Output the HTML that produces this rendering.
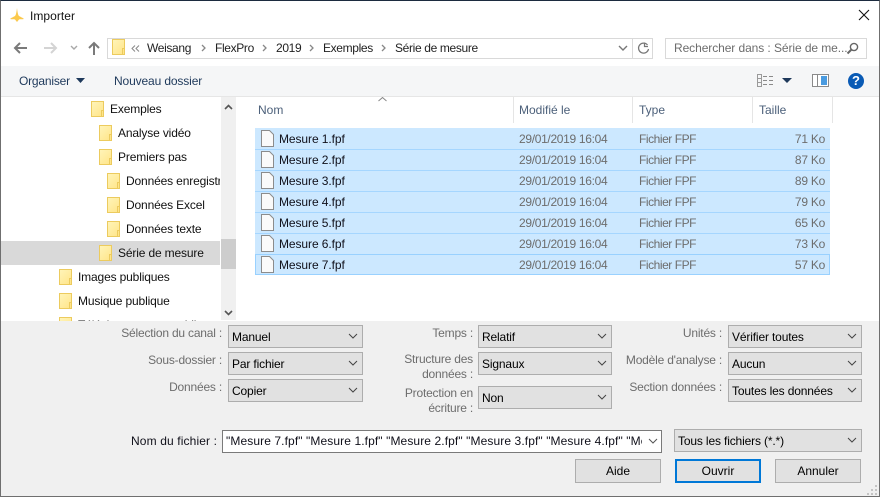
<!DOCTYPE html>
<html><head><meta charset="utf-8"><style>
html,body{margin:0;padding:0;background:#fff}
body{width:880px;height:497px;overflow:hidden;position:relative;font:12px/16px "Liberation Sans",sans-serif;color:#000}
div,span,svg{position:absolute;box-sizing:border-box;white-space:nowrap}
.f{width:13px;height:16px;background:linear-gradient(135deg,#fff4b8,#ffe58a);border:1px solid #eccb5e}
.f:after{content:"";position:absolute;right:-1px;bottom:-1px;width:3px;height:7px;border:1px solid #eccb5e;background:#ffe58a;box-sizing:border-box}
.t{color:#111;letter-spacing:-.15px}
.p{top:40px;color:#222;letter-spacing:-.35px}
.hd{color:#4c607a;top:102px}
.sep{width:1px;top:97px;height:26px;background:#e5e5e5}
.row{left:255px;width:575px;height:21px;top:0;background:#cce8ff;border-bottom:1px solid #a5d6ff}
.n{left:279px;color:#10101a;letter-spacing:-.08px}
.d{left:519px;color:#6d6d6d;letter-spacing:-.32px}
.y{left:639px;color:#6d6d6d;letter-spacing:-.45px}
.z{width:60px;left:765px;text-align:right;color:#6d6d6d;letter-spacing:-.25px}
.l{color:#6d6d6d;text-align:right;letter-spacing:-.2px}
.c{height:23px;background:#e1e1e1;border:1px solid #adadad;padding:3px 0 0 3px;line-height:16px;letter-spacing:-.15px}
.c svg{right:4px;top:7px}
.b{background:#e1e1e1;border:1px solid #adadad;height:24px;width:86px;top:459px;text-align:center;line-height:22px}
</style></head><body>

<div style="left:0;top:0;width:880px;height:497px;border:1px solid #6f6f6f;border-top:1px solid #1c2b3f;z-index:50"></div>

<svg style="left:10px;top:8px" width="14" height="14" viewBox="0 0 14 14"><path d="M7 0C7.5 4 8 7 9 8C10.5 9 12.5 9.5 14 11C12 11.5 10 11 9 11.5L7 14L5 11.5C4 11 2 11.5 0 11C1.5 9.5 3.5 9 5 8C6 7 6.5 4 7 0Z" fill="#fbc94c"/></svg>
<div style="left:30px;top:8px;color:#111;letter-spacing:.05px">Importer</div>
<svg style="left:858px;top:9px" width="12" height="12" viewBox="0 0 12 12"><path d="M1 1L11 11M11 1L1 11" stroke="#111" stroke-width="1.1" fill="none"/></svg>

<svg style="left:13px;top:41px" width="16" height="14" viewBox="0 0 16 14"><path d="M14 7H2M7 2L2 7L7 12" stroke="#7a7a7a" stroke-width="2" fill="none"/></svg>
<svg style="left:43px;top:41px" width="16" height="14" viewBox="0 0 16 14"><path d="M1 7H13M8 2L13 7L8 12" stroke="#d4d4d4" stroke-width="2" fill="none"/></svg>
<svg style="left:70px;top:45px" width="8" height="6" viewBox="0 0 8 6"><path d="M1 1L4 4L7 1" stroke="#a8a8a8" stroke-width="1.4" fill="none"/></svg>
<svg style="left:87px;top:41px" width="14" height="14" viewBox="0 0 14 14"><path d="M7 14V2M2 7L7 2L12 7" stroke="#7a7a7a" stroke-width="2" fill="none"/></svg>

<div style="left:107px;top:38px;width:546px;height:21px;border:1px solid #d9d9d9"></div>
<div class="f" style="left:112px;top:39px;height:16px"></div>
<svg style="left:131px;top:45px" width="9" height="7" viewBox="0 0 9 7"><path d="M4 .5L1 3.5L4 6.5M8 .5L5 3.5L8 6.5" stroke="#888" fill="none"/></svg>
<div class="p" style="left:147px">Weisang</div>
<svg style="left:201px;top:44px" width="6" height="8" viewBox="0 0 6 8"><path d="M1 1L4 4L1 7" stroke="#888" stroke-width="1.3" fill="none"/></svg>
<div class="p" style="left:215px">FlexPro</div>
<svg style="left:262px;top:44px" width="6" height="8" viewBox="0 0 6 8"><path d="M1 1L4 4L1 7" stroke="#888" stroke-width="1.3" fill="none"/></svg>
<div class="p" style="left:276px">2019</div>
<svg style="left:309px;top:44px" width="6" height="8" viewBox="0 0 6 8"><path d="M1 1L4 4L1 7" stroke="#888" stroke-width="1.3" fill="none"/></svg>
<div class="p" style="left:323px">Exemples</div>
<svg style="left:381px;top:44px" width="6" height="8" viewBox="0 0 6 8"><path d="M1 1L4 4L1 7" stroke="#888" stroke-width="1.3" fill="none"/></svg>
<div class="p" style="left:395px">Série de mesure</div>
<svg style="left:618px;top:45px" width="10" height="7" viewBox="0 0 10 7"><path d="M1 1L5 5L9 1" stroke="#777" stroke-width="1.4" fill="none"/></svg>
<div style="left:632px;top:38px;width:1px;height:21px;background:#d9d9d9"></div>
<svg style="left:637px;top:41px" width="14" height="14" viewBox="0 0 14 14"><path d="M10.5 4A5 5 0 1 0 11.5 8" stroke="#777" stroke-width="1.3" fill="none"/><path d="M7.5 1.5V5.5H11" stroke="#777" stroke-width="1.2" fill="none"/></svg>

<div style="left:665px;top:38px;width:202px;height:21px;border:1px solid #d9d9d9"></div>
<div style="left:674px;top:40px;color:#6d6d6d;letter-spacing:-.08px">Rechercher dans : Série de me...</div>
<svg style="left:846px;top:42px" width="13" height="13" viewBox="0 0 13 13"><circle cx="8" cy="5" r="3.6" stroke="#666" stroke-width="1.4" fill="none"/><path d="M5.5 7.5L1.5 11.5" stroke="#666" stroke-width="2"/></svg>

<div style="left:1px;top:66px;width:878px;height:31px;background:#f5f6f7;border-bottom:1px solid #e6e6e6"></div>
<div style="left:19px;top:73px;color:#1e395b;letter-spacing:-.2px">Organiser</div>
<svg style="left:76px;top:78px" width="9" height="6" viewBox="0 0 9 6"><path d="M0 0H9L4.5 5Z" fill="#1e395b"/></svg>
<div style="left:114px;top:73px;color:#1e395b;letter-spacing:-.13px">Nouveau dossier</div>
<svg style="left:757px;top:74px" width="17" height="13" viewBox="0 0 17 13"><path d="M.5.5H4.5V12.5H.5ZM.5 4.5H4.5M.5 8.5H4.5" stroke="#9a9a9a" fill="none"/><path d="M6 2.5H10M12 2.5H16M6 6.5H10M12 6.5H16M6 10.5H10M12 10.5H16" stroke="#8a8a8a"/></svg>
<svg style="left:782px;top:78px" width="10" height="6" viewBox="0 0 10 6"><path d="M0 0H10L5 5Z" fill="#1e395b"/></svg>
<svg style="left:812px;top:74px" width="17" height="13" viewBox="0 0 17 13"><rect x=".5" y=".5" width="16" height="12" fill="#fff" stroke="#8a8a8a"/><rect x="9" y="2" width="6" height="9" fill="#4a9be0"/><path d="M5.5 1V12" stroke="#8a8a8a"/></svg>
<svg style="left:848px;top:73px" width="16" height="16" viewBox="0 0 16 16"><circle cx="8" cy="8" r="8" fill="#0a5bb5"/></svg>
<div style="left:848px;top:73px;width:16px;text-align:center;color:#fff;font-weight:bold;font-size:13px">?</div>

<div style="left:221px;top:97px;width:15px;height:223px;background:#f0f0f0"></div>
<div style="left:221px;top:239px;width:15px;height:30px;background:#cdcdcd"></div>
<svg style="left:224px;top:104px" width="9" height="6" viewBox="0 0 9 6"><path d="M1 5L4.5 1.5L8 5" stroke="#555" stroke-width="1.6" fill="none"/></svg>
<svg style="left:224px;top:310px" width="9" height="6" viewBox="0 0 9 6"><path d="M1 1L4.5 4.5L8 1" stroke="#555" stroke-width="1.6" fill="none"/></svg>

<div style="left:1px;top:241px;width:219px;height:24px;background:#d9d9d9"></div>
<div class="f" style="left:91px;top:101px"></div><div class="t" style="left:110px;top:101px">Exemples</div>
<div class="f" style="left:99px;top:125px"></div><div class="t" style="left:118px;top:125px">Analyse vidéo</div>
<div class="f" style="left:99px;top:149px"></div><div class="t" style="left:118px;top:149px">Premiers pas</div>
<div class="f" style="left:107px;top:173px"></div><div class="t" style="left:126px;top:173px;width:94px;overflow:hidden">Données enregistrées</div>
<div class="f" style="left:107px;top:197px"></div><div class="t" style="left:126px;top:197px">Données Excel</div>
<div class="f" style="left:107px;top:221px"></div><div class="t" style="left:126px;top:221px">Données texte</div>
<div class="f" style="left:99px;top:245px"></div><div class="t" style="left:118px;top:245px">Série de mesure</div>
<div class="f" style="left:59px;top:269px"></div><div class="t" style="left:78px;top:269px">Images publiques</div>
<div class="f" style="left:59px;top:293px"></div><div class="t" style="left:78px;top:293px">Musique publique</div>
<div class="f" style="left:59px;top:317px"></div><div class="t" style="left:78px;top:317px">Téléchargements publics</div>

<div class="hd" style="left:258px">Nom</div>
<svg style="left:378px;top:97px" width="9" height="5" viewBox="0 0 9 5"><path d="M.5 4L4.5 .5L8.5 4" stroke="#888" fill="none"/></svg>
<div class="sep" style="left:513px"></div><div class="hd" style="left:519px">Modifié le</div>
<div class="sep" style="left:632px"></div><div class="hd" style="left:639px">Type</div>
<div class="sep" style="left:752px"></div><div class="hd" style="left:759px">Taille</div>
<div class="sep" style="left:832px"></div>

<div class="row" style="top:128px;height:22px"></div><div class="row" style="top:150px"></div><div class="row" style="top:171px"></div><div class="row" style="top:192px"></div><div class="row" style="top:213px"></div><div class="row" style="top:234px"></div><div class="row" style="top:254px;height:21px;border:1px solid #99d1ff"></div>

<svg style="left:261px;top:130px" width="13" height="17" viewBox="0 0 13 17"><path d="M.5.5H8.5L12.5 4.5V16.5H.5Z" fill="#fafafa" stroke="#8c8c8c"/></svg>
<svg style="left:261px;top:151px" width="13" height="17" viewBox="0 0 13 17"><path d="M.5.5H8.5L12.5 4.5V16.5H.5Z" fill="#fafafa" stroke="#8c8c8c"/></svg>
<svg style="left:261px;top:172px" width="13" height="17" viewBox="0 0 13 17"><path d="M.5.5H8.5L12.5 4.5V16.5H.5Z" fill="#fafafa" stroke="#8c8c8c"/></svg>
<svg style="left:261px;top:193px" width="13" height="17" viewBox="0 0 13 17"><path d="M.5.5H8.5L12.5 4.5V16.5H.5Z" fill="#fafafa" stroke="#8c8c8c"/></svg>
<svg style="left:261px;top:214px" width="13" height="17" viewBox="0 0 13 17"><path d="M.5.5H8.5L12.5 4.5V16.5H.5Z" fill="#fafafa" stroke="#8c8c8c"/></svg>
<svg style="left:261px;top:235px" width="13" height="17" viewBox="0 0 13 17"><path d="M.5.5H8.5L12.5 4.5V16.5H.5Z" fill="#fafafa" stroke="#8c8c8c"/></svg>
<svg style="left:261px;top:256px" width="13" height="17" viewBox="0 0 13 17"><path d="M.5.5H8.5L12.5 4.5V16.5H.5Z" fill="#fafafa" stroke="#8c8c8c"/></svg>

<div class="n" style="top:131px">Mesure 1.fpf</div><div class="d" style="top:131px">29/01/2019 16:04</div><div class="y" style="top:131px">Fichier FPF</div><div class="z" style="top:131px">71 Ko</div>
<div class="n" style="top:152px">Mesure 2.fpf</div><div class="d" style="top:152px">29/01/2019 16:04</div><div class="y" style="top:152px">Fichier FPF</div><div class="z" style="top:152px">87 Ko</div>
<div class="n" style="top:173px">Mesure 3.fpf</div><div class="d" style="top:173px">29/01/2019 16:04</div><div class="y" style="top:173px">Fichier FPF</div><div class="z" style="top:173px">89 Ko</div>
<div class="n" style="top:194px">Mesure 4.fpf</div><div class="d" style="top:194px">29/01/2019 16:04</div><div class="y" style="top:194px">Fichier FPF</div><div class="z" style="top:194px">79 Ko</div>
<div class="n" style="top:215px">Mesure 5.fpf</div><div class="d" style="top:215px">29/01/2019 16:04</div><div class="y" style="top:215px">Fichier FPF</div><div class="z" style="top:215px">65 Ko</div>
<div class="n" style="top:236px">Mesure 6.fpf</div><div class="d" style="top:236px">29/01/2019 16:04</div><div class="y" style="top:236px">Fichier FPF</div><div class="z" style="top:236px">73 Ko</div>
<div class="n" style="top:257px">Mesure 7.fpf</div><div class="d" style="top:257px">29/01/2019 16:04</div><div class="y" style="top:257px">Fichier FPF</div><div class="z" style="top:257px">57 Ko</div>

<div style="left:1px;top:321px;width:878px;height:175px;background:#f0f0f0"></div>

<div class="l" style="left:60px;width:162px;top:325px">Sélection du canal :</div>
<div class="l" style="left:60px;width:162px;top:352px">Sous-dossier :</div>
<div class="l" style="left:60px;width:162px;top:379px">Données :</div>
<div class="c" style="left:228px;top:325px;width:135px">Manuel<svg width="10" height="7" viewBox="0 0 10 7"><path d="M1 1L5 5L9 1" stroke="#444" fill="none"/></svg></div>
<div class="c" style="left:228px;top:352px;width:135px">Par fichier<svg width="10" height="7" viewBox="0 0 10 7"><path d="M1 1L5 5L9 1" stroke="#444" fill="none"/></svg></div>
<div class="c" style="left:228px;top:379px;width:135px">Copier<svg width="10" height="7" viewBox="0 0 10 7"><path d="M1 1L5 5L9 1" stroke="#444" fill="none"/></svg></div>

<div class="l" style="left:380px;width:93px;top:352px;line-height:15px">Structure des<br>données :</div>
<div class="l" style="left:380px;width:93px;top:325px">Temps :</div>
<div class="l" style="left:380px;width:93px;top:386px;line-height:15px">Protection en<br>écriture :</div>
<div class="c" style="left:478px;top:325px;width:134px">Relatif<svg width="10" height="7" viewBox="0 0 10 7"><path d="M1 1L5 5L9 1" stroke="#444" fill="none"/></svg></div>
<div class="c" style="left:478px;top:352px;width:134px">Signaux<svg width="10" height="7" viewBox="0 0 10 7"><path d="M1 1L5 5L9 1" stroke="#444" fill="none"/></svg></div>
<div class="c" style="left:478px;top:386px;width:134px">Non<svg width="10" height="7" viewBox="0 0 10 7"><path d="M1 1L5 5L9 1" stroke="#444" fill="none"/></svg></div>

<div class="l" style="left:610px;width:112px;top:325px">Unités :</div>
<div class="l" style="left:610px;width:112px;top:352px">Modèle d'analyse :</div>
<div class="l" style="left:610px;width:112px;top:379px">Section données :</div>
<div class="c" style="left:728px;top:325px;width:134px">Vérifier toutes<svg width="10" height="7" viewBox="0 0 10 7"><path d="M1 1L5 5L9 1" stroke="#444" fill="none"/></svg></div>
<div class="c" style="left:728px;top:352px;width:134px">Aucun<svg width="10" height="7" viewBox="0 0 10 7"><path d="M1 1L5 5L9 1" stroke="#444" fill="none"/></svg></div>
<div class="c" style="left:728px;top:379px;width:134px">Toutes les données<svg width="10" height="7" viewBox="0 0 10 7"><path d="M1 1L5 5L9 1" stroke="#444" fill="none"/></svg></div>

<div style="left:131px;top:433px;color:#10101a;letter-spacing:.13px">Nom du fichier :</div>
<div style="left:222px;top:430px;width:440px;height:23px;background:#fff;border:1px solid #7a7a7a"></div>
<div style="left:226px;top:433px;width:416px;overflow:hidden;color:#10101a;letter-spacing:.1px">"Mesure 7.fpf" "Mesure 1.fpf" "Mesure 2.fpf" "Mesure 3.fpf" "Mesure 4.fpf" "Mesure 5.fpf"</div>
<svg style="left:648px;top:438px" width="10" height="7" viewBox="0 0 10 7"><path d="M1 1L5 5L9 1" stroke="#555" fill="none"/></svg>
<div class="c" style="left:674px;top:429px;width:188px;height:23px">Tous les fichiers (*.*)<svg width="10" height="7" viewBox="0 0 10 7"><path d="M1 1L5 5L9 1" stroke="#444" fill="none"/></svg></div>

<div class="b" style="left:575px">Aide</div>
<div class="b" style="left:675px;border:2px solid #0078d7;line-height:20px">Ouvrir</div>
<div class="b" style="left:775px">Annuler</div>

<svg style="left:867px;top:484px" width="11" height="11" viewBox="0 0 11 11"><path d="M8 1h2v2H8zM4 5h2v2H4zM8 5h2v2H8zM0 9h2v2H0zM4 9h2v2H4zM8 9h2v2H8z" fill="#c4c4c4"/></svg>
</body></html>
